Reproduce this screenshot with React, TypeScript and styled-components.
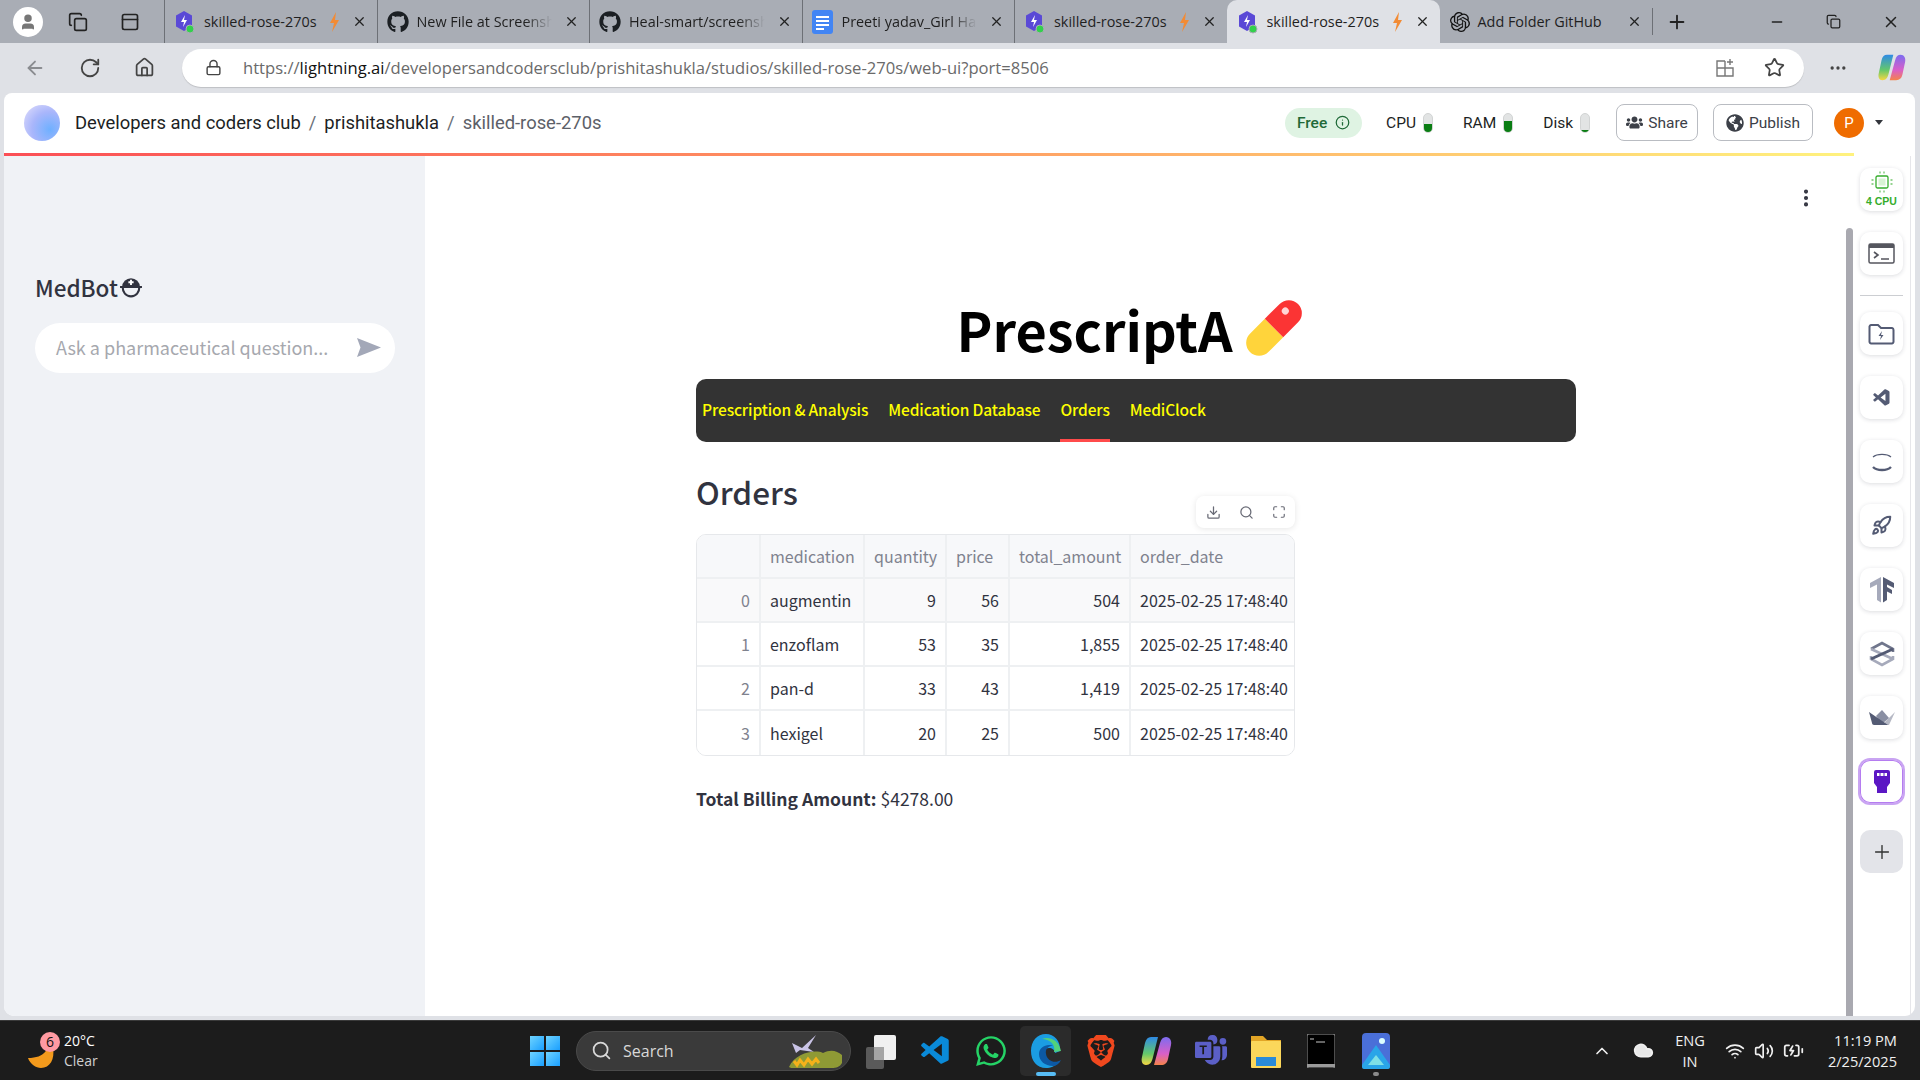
import styled, { createGlobalStyle } from 'styled-components';
import { FaGithub, FaWhatsapp, FaUsers, FaGlobeAmericas } from 'react-icons/fa';
import { SiOpenai, SiBrave } from 'react-icons/si';
import { BsMicrosoftTeams } from 'react-icons/bs';
import { VscVscode } from 'react-icons/vsc';
import {
    ArrowLeft, RotateCw, Home, Lock, Star, MoreHorizontal, X, Plus, Minus, Copy,
    Info, MoreVertical, Download, Search, Maximize, Rocket,
    ChevronUp, Wifi, Volume2, BatteryCharging, Cloud, User, PanelTop,
} from 'lucide-react';

const GlobalStyle = createGlobalStyle`
    html, body { margin: 0; padding: 0; height: 1080px; overflow: hidden; }
    #root { height: 1080px; }
    * { box-sizing: border-box; }
`;

const streamlitFont = `"Noto Sans CJK SC", "Noto Sans", sans-serif`;
const chromeFont = `"Open Sans", "Noto Sans", sans-serif`;

const Page = styled.div`
    width: 1920px;
    height: 1080px;
    display: flex;
    flex-direction: column;
    background: #dfe1e6;
    font-family: ${chromeFont};
`;

/* browser tab strip */
const TabStrip = styled.div`
    height: 43px;
    display: flex;
    align-items: center;
    background: #a9adb5;
    flex-shrink: 0;
`;
const StripStart = styled.div`
    width: 164px;
    display: flex;
    align-items: center;
    gap: 25px;
    padding-left: 13px;
`;
const PanelSlot = styled.span`
    margin-left: 7px;
    display: flex;
`;
const ProfileDot = styled.div`
    width: 30px;
    height: 30px;
    border-radius: 50%;
    background: #fff;
    display: flex;
    align-items: center;
    justify-content: center;
`;
const Tab = styled.div<{ $active?: boolean; $sep?: boolean }>`
    width: ${({ $active }) => ($active ? '213px' : '212.5px')};
    height: 43px;
    display: flex;
    align-items: center;
    padding: 0 10px 0 9px;
    font-size: 14.4px;
    color: #1f1f1f;
    border-left: 1px solid ${({ $sep }) => ($sep ? '#6d7076' : 'transparent')};
    background: ${({ $active }) => ($active ? '#dfe1e6' : 'transparent')};
    border-radius: ${({ $active }) => ($active ? '10px 10px 0 0' : '0')};
    svg { flex-shrink: 0; }
`;
const TabTitle = styled.span<{ $fade?: boolean }>`
    flex: 1;
    min-width: 0;
    margin-left: 8px;
    white-space: nowrap;
    ${({ $fade }) => $fade && 'mask-image: linear-gradient(90deg, #000 80%, transparent 100%);'}
`;
const TabClose = styled.span`
    margin-left: 12px;
    display: flex;
`;
const StripEnd = styled.div`
    flex: 1;
    display: flex;
    align-items: center;
    border-left: 1px solid #6d7076;
    height: 27px;
    padding-left: 13px;
`;
const WindowControls = styled.div`
    margin-left: auto;
    display: flex;
    align-items: center;
    gap: 41px;
    padding-right: 20px;
`;

/* address bar */
const Toolbar = styled.div`
    height: 50px;
    display: flex;
    align-items: center;
    padding: 0 14px 1px 24px;
    color: #444;
    flex-shrink: 0;
`;
const NavIcons = styled.div`
    display: flex;
    align-items: center;
    gap: 33px;
    width: 158px;
`;
const AddressBar = styled.div`
    width: 1622px;
    height: 38px;
    border-radius: 19px;
    background: #fff;
    box-shadow: 0 1px 1px rgba(0, 0, 0, 0.15);
    display: flex;
    align-items: center;
    padding: 0 19px 0 23px;
`;
const Url = styled.div`
    margin-left: 21px;
    font-size: 16.6px;
    color: #6a6a6a;
    flex: 1;
    white-space: nowrap;
    b { color: #111; font-weight: 400; }
`;
const BarIcons = styled.div`
    display: flex;
    align-items: center;
    gap: 29px;
`;
const ToolbarEnd = styled.div`
    flex: 1;
    display: flex;
    align-items: center;
    justify-content: flex-end;
    gap: 29px;
`;

/* the web page window */
const Window = styled.div`
    height: 923px;
    margin: 0 5px 0 4px;
    display: flex;
    flex-direction: column;
    background: #fff;
    border-radius: 8px 8px 10px 10px;
    overflow: hidden;
    flex-shrink: 0;
`;
const AppHeader = styled.header`
    height: 60px;
    display: flex;
    align-items: center;
    padding: 0 0 1px 20px;
    font-family: Roboto, sans-serif;
    flex-shrink: 0;
`;
const Logo = styled.div`
    width: 36px;
    height: 36px;
    border-radius: 50%;
    background: radial-gradient(circle at 72% 68%, #6fb0ff 0%, #a9b6fb 50%, #e4e0fb 100%);
`;
const Crumbs = styled.div`
    margin-left: 15px;
    display: flex;
    align-items: center;
    gap: 8px;
    font-size: 18.4px;
    color: #1d1f24;
`;
const CrumbSep = styled.span`
    color: #6b6f78;
`;
const CrumbLast = styled.span`
    color: #5c6068;
`;
const HeaderEnd = styled.div`
    margin-left: auto;
    display: flex;
    align-items: center;
    padding-right: 32px;
`;
const FreePill = styled.div`
    width: 77px;
    height: 30px;
    border-radius: 15px;
    background: #dff3e3;
    color: #1f6a38;
    font-size: 15.5px;
    font-weight: 500;
    display: flex;
    align-items: center;
    justify-content: center;
    gap: 8px;
    margin-right: 24px;
`;
const Stats = styled.div`
    display: flex;
    align-items: center;
    gap: 30px;
    margin-right: 26px;
`;
const Stat = styled.div`
    display: flex;
    align-items: center;
    gap: 7px;
    font-size: 15.5px;
    color: #1d1f24;
`;
const Meter = styled.div`
    width: 10px;
    height: 20px;
    border-radius: 5px;
    background: #e2e4e4;
    border: 1px solid #d2d4d4;
    overflow: hidden;
    display: flex;
    align-items: flex-end;
`;
const MeterFill = styled.div<{ $level: number }>`
    width: 100%;
    height: ${({ $level }) => $level}%;
    background: #0a7d13;
`;
const HeaderButton = styled.div<{ $width: number }>`
    width: ${({ $width }) => $width}px;
    height: 37px;
    border: 1px solid #b9bcc2;
    border-radius: 8px;
    display: flex;
    align-items: center;
    justify-content: center;
    gap: 5px;
    font-size: 15.5px;
    color: #3c4048;
    margin-right: 15px;
`;
const Avatar = styled.div`
    width: 30px;
    height: 30px;
    margin-left: 6px;
    border-radius: 50%;
    background: #ef6c00;
    color: #fff;
    font-size: 15px;
    display: flex;
    align-items: center;
    justify-content: center;
`;
const Caret = styled.div`
    margin-left: 11px;
    border-left: 4px solid transparent;
    border-right: 4px solid transparent;
    border-top: 5px solid #33363c;
`;
const Rainbow = styled.div`
    height: 3px;
    flex-shrink: 0;
    width: 1850px;
    background: linear-gradient(90deg, #fb4f56 0%, #ff9a62 50%, #fff27e 100%);
`;

const Body = styled.div`
    flex: 1;
    display: flex;
    min-height: 0;
`;
const Sidebar = styled.aside`
    width: 421px;
    background: #f0f2f6;
    padding: 114px 31px 0;
    font-family: ${streamlitFont};
    color: #31333f;
`;
const SideTitle = styled.div`
    display: flex;
    align-items: center;
    height: 34px;
    font-size: 22.5px;
    font-weight: 500;
    gap: 1px;
`;
const AskBox = styled.div`
    margin-top: 19px;
    width: 360px;
    height: 50px;
    border-radius: 25px;
    background: #fff;
    display: flex;
    align-items: center;
    justify-content: space-between;
    padding: 0 14px 2px 21px;
    font-size: 18px;
    color: #a6a8ae;
    white-space: nowrap;
`;
const Main = styled.main`
    position: relative;
    width: 1421px;
    padding: 141px 270px 0 271px;
    font-family: ${streamlitFont};
    color: #31333f;
`;
const KebabSpot = styled.div`
    position: absolute;
    top: 31px;
    right: 29px;
    color: #31333f;
    display: flex;
`;
const Title = styled.h1`
    margin: 0 0 20px;
    height: 62px;
    display: flex;
    align-items: center;
    justify-content: center;
    gap: 11px;
    font-size: 54px;
    font-weight: 700;
    color: #000;
    padding-right: 12px;
`;
const TabNav = styled.nav`
    height: 63px;
    border-radius: 10px;
    background: #333;
    display: flex;
    padding: 0 6px;
    gap: 20px;
`;
const NavTab = styled.div<{ $active?: boolean }>`
    display: flex;
    align-items: center;
    font-size: 15.5px;
    font-weight: 500;
    letter-spacing: -0.12px;
    color: #ffff00;
    padding-bottom: 3px;
    border-bottom: 3px solid ${({ $active }) => ($active ? '#ff4b4b' : 'transparent')};
    border-top: 3px solid transparent;
`;
const Heading = styled.h2`
    margin: 29px 0 0;
    height: 40px;
    display: flex;
    align-items: center;
    font-size: 31.5px;
    font-weight: 500;
    color: #31333f;
`;
const TableWrap = styled.div`
    position: relative;
    margin-top: 23px;
    width: 599px;
`;
const TableTools = styled.div`
    position: absolute;
    top: -38px;
    right: 0;
    width: 99px;
    height: 32px;
    background: #fff;
    border-radius: 8px;
    box-shadow: 0 1px 6px rgba(0, 0, 0, 0.1);
    display: flex;
    align-items: center;
    justify-content: center;
    gap: 18px;
    color: #686a75;
`;
const DataTable = styled.div`
    border: 1px solid #e6e8eb;
    border-radius: 10px;
    overflow: hidden;
`;
const Row = styled.div<{ $shade?: string }>`
    display: grid;
    grid-template-columns: 62px 104px 82px 63px 121px 1fr;
    height: 44px;
    background: ${({ $shade }) => $shade ?? '#fff'};
    border-bottom: 2px solid #eef0f2;
    &:last-child { border-bottom: 0; }
`;
const Cell = styled.div<{ $right?: boolean; $muted?: boolean }>`
    display: flex;
    align-items: center;
    justify-content: ${({ $right }) => ($right ? 'flex-end' : 'flex-start')};
    padding: 0 9px 0 9px;
    font-size: 16px;
    color: ${({ $muted }) => ($muted ? '#7f828e' : '#31333f')};
    border-left: 2px solid #eef0f2;
    white-space: nowrap;
    &:first-child { border-left: 0; }
`;
const Billing = styled.div`
    margin-top: 30px;
    font-size: 17.5px;
    color: #31333f;
    b { font-weight: 700; }
`;
const ScrollTrack = styled.div`
    width: 7px;
    display: flex;
    flex-direction: column;
    background: #fff;
`;
const ScrollThumb = styled.div`
    margin-top: 72px;
    flex: 1;
    background: #a9a9b0;
    border-radius: 4px 4px 0 0;
`;
const Rail = styled.div`
    width: 57px;
    display: flex;
    flex-direction: column;
    align-items: center;
    padding-top: 12px;
    background: #fff;
    box-shadow: 1px 0 0 #e6e6ea;
`;
const RailGroup = styled.div`
    display: flex;
    flex-direction: column;
    gap: 21px;
`;
const RailDivider = styled.div`
    width: 43px;
    height: 1px;
    background: #ccced2;
    margin: 20px 0 16px;
`;
const RailButton = styled.div<{ $tone?: 'plain' | 'grey' | 'glow' }>`
    width: 43px;
    height: 43px;
    border-radius: 10px;
    display: flex;
    flex-direction: column;
    align-items: center;
    justify-content: center;
    color: #545b74;
    background: ${({ $tone }) => ($tone === 'grey' ? '#e3e4e9' : '#fff')};
    box-shadow: ${({ $tone }) => ($tone === 'grey' ? 'none' : $tone === 'glow' ? '0 0 0 2px #c9a4f2, inset 0 0 0 1px #b57cf0' : '0 1px 4px rgba(40, 44, 60, 0.16)')};
`;
const CpuLabel = styled.span`
    font-family: "Liberation Sans", sans-serif;
    font-size: 10.5px;
    font-weight: 700;
    color: #35ad2c;
    line-height: 10px;
    margin: 2px 0 3px;
    white-space: nowrap;
`;
const RailPlus = styled.div`
    margin-top: 27px;
`;

/* windows taskbar */
const Taskbar = styled.footer`
    margin-top: auto;
    height: 60px;
    flex-shrink: 0;
    background: #1c1c1c;
    border-top: 1px solid #3a3a3a;
    display: flex;
    align-items: center;
    color: #fff;
    font-family: ${chromeFont};
`;
const Weather = styled.div`
    width: 530px;
    display: flex;
    align-items: center;
    padding-left: 26px;
    gap: 8px;
`;
const WeatherIcon = styled.div`
    position: relative;
    width: 30px;
    height: 36px;
    display: flex;
`;
const WeatherBadge = styled.span`
    position: absolute;
    top: -1px;
    right: -4px;
    width: 20px;
    height: 20px;
    border-radius: 50%;
    background: #ff9aa2;
    color: #111;
    font-size: 14px;
    display: flex;
    align-items: center;
    justify-content: center;
`;
const WeatherText = styled.div`
    font-size: 14px;
    line-height: 20px;
    span { display: block; color: #d0d0d0; }
`;
const WinLogo = styled.div`
    width: 30px;
    height: 30px;
    display: grid;
    grid-template-columns: 1fr 1fr;
    gap: 2px;
    div { background: linear-gradient(135deg, #6fd4ff, #1a9fff); }
`;
const SearchPill = styled.div`
    margin-left: 16px;
    width: 275px;
    height: 40px;
    border-radius: 20px;
    background: #3a3a3a;
    border: 1px solid #4a4a4a;
    display: flex;
    align-items: center;
    padding: 0 4px 0 14px;
    gap: 11px;
    font-size: 16px;
    color: #d8d8d8;
`;
const SearchArt = styled.div`
    margin-left: auto;
    display: flex;
`;
const TaskIcons = styled.div`
    display: flex;
    align-items: center;
    margin-left: 2px;
`;
const TaskIcon = styled.div<{ $selected?: boolean }>`
    position: relative;
    width: 55px;
    height: 50px;
    display: flex;
    align-items: center;
    justify-content: center;
    &::before {
        content: '';
        position: absolute;
        inset: 0 2px;
        border-radius: 5px;
        background: ${({ $selected }) => ($selected ? '#2b2b2b' : 'transparent')};
    }
    svg { position: relative; }
`;
const TaskMark = styled.span<{ $color: string; $width: number }>`
    position: absolute;
    bottom: 0;
    left: 50%;
    transform: translateX(-50%);
    width: ${({ $width }) => $width}px;
    height: 4px;
    border-radius: 2px;
    background: ${({ $color }) => $color};
`;
const Tray = styled.div`
    margin-left: auto;
    display: flex;
    align-items: center;
    padding-right: 23px;
    font-size: 14.6px;
    color: #f0f0f0;
`;
const CloudSlot = styled.span`
    margin-left: 21px;
    display: flex;
`;
const Lang = styled.div`
    margin: 0 20px 0 21px;
    text-align: center;
    line-height: 21px;
`;
const TrayIcons = styled.div`
    display: flex;
    align-items: center;
    gap: 9px;
    margin-right: 24px;
`;
const Clock = styled.div`
    text-align: right;
    line-height: 21px;
`;

const LightningFav = () => (
    <svg width="22" height="24" viewBox="0 0 22 24">
        <path d="M10 1l8 4.5v11L10 21 2 16.500v-11z" fill="#5a49d6" />
        <path d="M11 5l-4 7h3l-1 5 4-7h-3z" fill="#fff" />
        <circle cx="16" cy="19" r="4" fill="#33d04c" stroke="#a9adb5" />
    </svg>
);
const Bolt = () => (
    <svg width="11" height="20" viewBox="0 0 11 20">
        <path d="M7 0L1 11h4l-2 9 7-12H6z" fill="#f28b35" />
    </svg>
);
const DocsFav = () => (
    <svg width="22" height="24" viewBox="0 0 22 24">
        <rect width="21" height="24" rx="3" fill="#4285f4" />
        <path d="M4 7h13M4 11h13M4 15h13M4 19h8" stroke="#fff" strokeWidth="2" />
    </svg>
);
const TileIcon = () => (
    <svg width="20" height="20" viewBox="0 0 20 20" fill="none" stroke="#777" strokeWidth="1.400">
        <path d="M10 3H2v15h16v-8H2M10 3v15" />
        <path d="M15 1v6M12 4h6" />
    </svg>
);
const Pill = () => (
    <svg width="60" height="60" viewBox="0 0 60 60">
        <g transform="rotate(-45 30 30)">
            <path d="M30 17H9a13 13 0 0 0 0 26h21z" fill="#ffd43b" />
            <path d="M30 17h21a13 13 0 0 1 0 26H30z" fill="#fb3434" />
            <circle cx="50" cy="26" r="3.500" fill="#ffd5d5" />
        </g>
    </svg>
);
const MedIcon = () => (
    <svg width="24" height="24" viewBox="0 0 23 22">
        <path d="M3 11a8.500 8.500 0 0 1 17 0z" fill="#31333f" />
        <path d="M1 11h21M3.500 11c0 5 3 9 8 9s8-4 8-9" fill="none" stroke="#31333f" strokeWidth="2" />
        <path d="M11.500 4v5M9 6.500h5" stroke="#fff" strokeWidth="1.800" />
    </svg>
);
const SendIcon = () => (
    <svg width="24" height="19" viewBox="0 0 24 19">
        <path d="M0 0l24 9.500L0 19l3.500-9.500z" fill="#a3a8b8" />
    </svg>
);
const Chip = () => (
    <svg width="24" height="24" viewBox="0 0 24 24" fill="none" stroke="#35ad2c" strokeWidth="1.300">
        <rect x="6" y="6" width="12" height="12" rx="1.500" />
        <rect x="8.500" y="8.500" width="7" height="7" fill="#d8f3d4" stroke="none" />
        <path d="M10 1.500v2M14 1.500v2M10 20.500v2M14 20.500v2M1.500 10h2M1.500 14h2M20.500 10h2M20.500 14h2" strokeOpacity="0.7" />
    </svg>
);
const TerminalIcon = () => (
    <svg width="27" height="21" viewBox="0 0 27 21">
        <rect x="1" y="1" width="25" height="19" rx="1.500" fill="none" stroke="#55565e" strokeWidth="1.500" />
        <rect x="1" y="1" width="25" height="4" fill="#55565e" />
        <path d="M6 9l4 3-4 3M13 16h8" fill="none" stroke="#55565e" strokeWidth="1.600" />
    </svg>
);
const FolderBolt = () => (
    <svg width="27" height="22" viewBox="0 0 27 22">
        <path d="M1.500 3.500A2 2 0 0 1 3 2h7l3 3h11a2 2 0 0 1 1.500 2v12a2 2 0 0 1-1.500 1.500H3A2 2 0 0 1 1.500 19z" fill="none" stroke="#545b74" strokeWidth="2" />
        <path d="M14 8l-3.500 5H13l-1 4 3.500-5H13z" fill="#545b74" />
    </svg>
);
const ArcIcon = () => (
    <svg width="20" height="20" viewBox="0 0 20 20" fill="none" stroke="#545b74">
        <path d="M1 5c4-3.500 14-3.500 18 0" strokeWidth="1.200" />
        <path d="M1 15c4 4 14 4 18 0" strokeWidth="2.400" />
    </svg>
);
const TfIcon = () => (
    <svg width="26" height="27" viewBox="0 0 26 27">
        <path d="M12 1L1 7v5l7-3.500V24l4 2.500z" fill="#a6aabb" />
        <path d="M14 1l11 6v5l-7-3.500V11l5 3v4l-5-2.500V24l-4 2.500z" fill="#545b74" />
    </svg>
);
const StackIcon = () => (
    <svg width="26" height="26" viewBox="0 0 26 26" fill="none">
        <path d="M2 8l11-6 11 6v3" stroke="#70768c" strokeWidth="2.600" />
        <path d="M2 15v3l11 6 11-6v-3" stroke="#a6aabb" strokeWidth="2.600" />
        <path d="M2 8l22 10" stroke="#a6aabb" strokeWidth="2.600" />
        <path d="M24 8L2 18" stroke="#545b74" strokeWidth="3" />
    </svg>
);
const BoatIcon = () => (
    <svg width="26" height="16" viewBox="0 0 26 16">
        <path d="M26 2l-6 13h-7l7-7z" fill="#b5b8c4" />
        <path d="M13 0l7 8-7 6-6-8z" fill="#8a8fa3" />
        <path d="M0 2l19 13H5c-1 0-2-1-2-2z" fill="#545b74" />
    </svg>
);
const PlugIcon = () => (
    <svg width="18" height="26" viewBox="0 0 18 26">
        <path d="M3 1h12a2 2 0 0 1 2 2v11l-3 4v6H4v-6l-3-4V3a2 2 0 0 1 2-2z" fill="#5b17c4" />
        <path d="M4 4h10v3H4z" fill="#fff" />
        <path d="M7 4v3M11 4v3" stroke="#5b17c4" />
    </svg>
);
const Moon = () => (
    <svg width="30" height="36" viewBox="0 0 30 36">
        <path d="M22 4c2 12-3 21-20 21 2 6 8 10 13 10 9 0 14-9 12-20-1-5-3-9-5-11z" fill="#f39a1c" />
    </svg>
);
const SearchDeco = () => (
    <svg width="60" height="36" viewBox="0 0 60 36">
        <path d="M6 10l10 5 14-13-8 13 6 4-14-2-4 3z" fill="#c9c3e6" />
        <path d="M3 34c6-14 26-18 34-14 8-4 14-2 19 2v8c-2 4-6 5-10 5H8c-2 0-4 0-5-1z" fill="#8f9a35" />
        <path d="M8 28l3 4 3-5 4 5 4-6 4 5 4-5 3 4" fill="none" stroke="#f5b21a" strokeWidth="3" />
    </svg>
);
const TaskView = () => (
    <svg width="30" height="36" viewBox="0 0 30 36">
        <rect x="0" y="14" width="18" height="22" rx="2" fill="#5a5a5a" />
        <rect x="8" y="2" width="22" height="25" rx="2" fill="#f0f0f0" />
        <rect x="8" y="14" width="10" height="13" fill="#a5a5a5" />
    </svg>
);
const EdgeIcon = () => (
    <svg width="32" height="36" viewBox="0 0 32 36">
        <path d="M16 1C7 1 1 8 1 18s6 17 15 17c5 0 9-2 11-5-9 3-15-2-15-8 0-4 3-7 7-7 3 0 6 2 6 5l5-2c1-10-6-17-14-17z" fill="#1b9de2" />
        <path d="M9 21c0 7 6 12 14 12 3 0 6-2 8-6-6 4-14 1-15-6-1-5 3-9 8-8-7-3-15 1-15 8z" fill="#0c59a4" />
        <path d="M12 6c6-3 17 0 19 12l-7 1c2-8-5-13-12-13z" fill="#52d17c" />
    </svg>
);
const CopilotIcon = ({ size }: { size: number }) => (
    <svg width={size} height={size} viewBox="0 0 32 32">
        <defs>
            <linearGradient id="cpA" x1="0" y1="0" x2="0" y2="1">
                <stop offset="0" stopColor="#2f8be6" />
                <stop offset="0.6" stopColor="#65c86a" />
                <stop offset="1" stopColor="#f6d743" />
            </linearGradient>
            <linearGradient id="cpB" x1="0" y1="0" x2="0" y2="1">
                <stop offset="0" stopColor="#7c6cf0" />
                <stop offset="0.6" stopColor="#d95fc8" />
                <stop offset="1" stopColor="#f5834a" />
            </linearGradient>
        </defs>
        <path d="M11 2h7l-5 20c-1 5-3 8-7 8-4 0-5-4-4-8l3-14c1-4 3-6 6-6z" fill="url(#cpA)" />
        <path d="M14 30h7c4 0 6-2 7-6l3-14c1-4-1-8-5-8-3 0-5 2-6 6z" fill="url(#cpB)" />
    </svg>
);
const FolderApp = () => (
    <svg width="32" height="36" viewBox="0 0 32 36">
        <path d="M1 3h12l4 4h14v4H1z" fill="#e2a526" />
        <rect x="1" y="8" width="30" height="27" rx="1" fill="#fbd75b" />
        <rect x="6" y="24" width="20" height="9" fill="#2a8bd8" />
    </svg>
);
const TerminalApp = () => (
    <svg width="28" height="34" viewBox="0 0 28 34">
        <rect width="28" height="34" rx="2" fill="#000" stroke="#9a9a9a" />
        <rect width="28" height="3" y="30" fill="#9a9a9a" />
        <path d="M3 5h4M9 8h9" stroke="#c8c8c8" />
    </svg>
);
const PhotosApp = () => (
    <svg width="28" height="36" viewBox="0 0 28 36">
        <rect width="28" height="36" rx="4" fill="#4a6fd8" />
        <circle cx="20" cy="8" r="3" fill="#dff" />
        <path d="M0 32l14-20 14 20v2a2 2 0 0 1-2 2H2a2 2 0 0 1-2-2z" fill="#2aa5e8" />
        <path d="M6 32l8-10 8 10z" fill="#7fe0e6" />
    </svg>
);

const rows = [
    { id: 0, med: 'augmentin', qty: '9', price: '56', total: '504', shade: '#f9f9fa' },
    { id: 1, med: 'enzoflam', qty: '53', price: '35', total: '1,855' },
    { id: 2, med: 'pan-d', qty: '33', price: '43', total: '1,419' },
    { id: 3, med: 'hexigel', qty: '20', price: '25', total: '500' },
];

const tabs = [
    { title: 'skilled-rose-270s', icon: <LightningFav />, bolt: true },
    { title: 'New File at Screensh', icon: <FaGithub size={22} color="#1b1f23" />, sep: true, fade: true },
    { title: 'Heal-smart/screensh', icon: <FaGithub size={22} color="#1b1f23" />, sep: true, fade: true },
    { title: 'Preeti yadav_Girl Hac', icon: <DocsFav />, sep: true, fade: true },
    { title: 'skilled-rose-270s', icon: <LightningFav />, bolt: true, sep: true },
    { title: 'skilled-rose-270s', icon: <LightningFav />, bolt: true, active: true },
    { title: 'Add Folder GitHub', icon: <SiOpenai size={20} color="#111" /> },
];

export default function App() {
    return (
        <Page>
            <GlobalStyle />
            <TabStrip>
                <StripStart>
                    <ProfileDot><User size={18} color="#777" fill="#777" /></ProfileDot>
                    <Copy size={20} color="#222" />
                    <PanelSlot><PanelTop size={20} color="#222" /></PanelSlot>
                </StripStart>
                {tabs.map((t, i) => (
                    <Tab key={i} $active={t.active} $sep={t.sep || i === 0}>
                        {t.icon}
                        <TabTitle $fade={t.fade}>{t.title}</TabTitle>
                        {t.bolt && <Bolt />}
                        <TabClose><X size={15} color="#222" /></TabClose>
                    </Tab>
                ))}
                <StripEnd>
                    <Plus size={22} color="#222" />
                    <WindowControls>
                        <Minus size={16} color="#222" />
                        <Copy size={15} color="#222" />
                        <X size={18} color="#222" />
                    </WindowControls>
                </StripEnd>
            </TabStrip>

            <Toolbar>
                <NavIcons>
                    <ArrowLeft size={22} color="#8a8c90" />
                    <RotateCw size={22} />
                    <Home size={21} />
                </NavIcons>
                <AddressBar>
                    <Lock size={17} />
                    <Url>https://<b>lightning.ai</b>/developersandcodersclub/prishitashukla/studios/skilled-rose-270s/web-ui?port=8506</Url>
                    <BarIcons>
                        <TileIcon />
                        <Star size={21} />
                    </BarIcons>
                </AddressBar>
                <ToolbarEnd>
                    <MoreHorizontal size={20} />
                    <CopilotIcon size={29} />
                </ToolbarEnd>
            </Toolbar>

            <Window>
                <AppHeader>
                    <Logo />
                    <Crumbs>
                        <span>Developers and coders club</span>
                        <CrumbSep>/</CrumbSep>
                        <span>prishitashukla</span>
                        <CrumbSep>/</CrumbSep>
                        <CrumbLast>skilled-rose-270s</CrumbLast>
                    </Crumbs>
                    <HeaderEnd>
                        <FreePill>Free <Info size={15} /></FreePill>
                        <Stats>
                            <Stat>CPU <Meter><MeterFill $level={40} /></Meter></Stat>
                            <Stat>RAM <Meter><MeterFill $level={60} /></Meter></Stat>
                            <Stat>Disk <Meter><MeterFill $level={8} /></Meter></Stat>
                        </Stats>
                        <HeaderButton $width={82}><FaUsers size={17} />Share</HeaderButton>
                        <HeaderButton $width={100}><FaGlobeAmericas size={18} />Publish</HeaderButton>
                        <Avatar>P</Avatar>
                        <Caret />
                    </HeaderEnd>
                </AppHeader>
                <Rainbow />
                <Body>
                    <Sidebar>
                        <SideTitle>MedBot<MedIcon /></SideTitle>
                        <AskBox>
                            Ask a pharmaceutical question...
                            <SendIcon />
                        </AskBox>
                    </Sidebar>
                    <Main>
                        <KebabSpot><MoreVertical size={22} strokeWidth={2.5} /></KebabSpot>
                        <Title>PrescriptA <Pill /></Title>
                        <TabNav>
                            <NavTab>Prescription &amp; Analysis</NavTab>
                            <NavTab>Medication Database</NavTab>
                            <NavTab $active>Orders</NavTab>
                            <NavTab>MediClock</NavTab>
                        </TabNav>
                        <Heading>Orders</Heading>
                        <TableWrap>
                            <TableTools>
                                <Download size={15} />
                                <Search size={15} />
                                <Maximize size={14} />
                            </TableTools>
                            <DataTable>
                                <Row $shade="#f7f8fa">
                                    <Cell />
                                    <Cell $muted>medication</Cell>
                                    <Cell $muted>quantity</Cell>
                                    <Cell $muted>price</Cell>
                                    <Cell $muted>total_amount</Cell>
                                    <Cell $muted>order_date</Cell>
                                </Row>
                                {rows.map((r) => (
                                    <Row key={r.id} $shade={r.shade}>
                                        <Cell $right $muted>{r.id}</Cell>
                                        <Cell>{r.med}</Cell>
                                        <Cell $right>{r.qty}</Cell>
                                        <Cell $right>{r.price}</Cell>
                                        <Cell $right>{r.total}</Cell>
                                        <Cell>2025-02-25 17:48:40</Cell>
                                    </Row>
                                ))}
                            </DataTable>
                        </TableWrap>
                        <Billing><b>Total Billing Amount:</b> $4278.00</Billing>
                    </Main>
                    <ScrollTrack><ScrollThumb /></ScrollTrack>
                    <Rail>
                        <RailGroup>
                            <RailButton><Chip /><CpuLabel>4 CPU</CpuLabel></RailButton>
                            <RailButton><TerminalIcon /></RailButton>
                        </RailGroup>
                        <RailDivider />
                        <RailGroup>
                            <RailButton><FolderBolt /></RailButton>
                            <RailButton><VscVscode size={20} /></RailButton>
                            <RailButton><ArcIcon /></RailButton>
                            <RailButton><Rocket size={21} strokeWidth={2.3} /></RailButton>
                            <RailButton><TfIcon /></RailButton>
                            <RailButton><StackIcon /></RailButton>
                            <RailButton><BoatIcon /></RailButton>
                            <RailButton $tone="glow"><PlugIcon /></RailButton>
                        </RailGroup>
                        <RailPlus>
                            <RailButton $tone="grey"><Plus size={22} color="#333" strokeWidth={1.5} /></RailButton>
                        </RailPlus>
                    </Rail>
                </Body>
            </Window>

            <Taskbar>
                <Weather>
                    <WeatherIcon><Moon /><WeatherBadge>6</WeatherBadge></WeatherIcon>
                    <WeatherText>20°C<span>Clear</span></WeatherText>
                </Weather>
                <WinLogo><div /><div /><div /><div /></WinLogo>
                <SearchPill>
                    <Search size={21} />
                    Search
                    <SearchArt><SearchDeco /></SearchArt>
                </SearchPill>
                <TaskIcons>
                    <TaskIcon><TaskView /></TaskIcon>
                    <TaskIcon><VscVscode size={34} color="#0a8ad8" /></TaskIcon>
                    <TaskIcon><FaWhatsapp size={34} color="#25d366" /></TaskIcon>
                    <TaskIcon $selected><EdgeIcon /><TaskMark $color="#58bdf5" $width={20} /></TaskIcon>
                    <TaskIcon><SiBrave size={32} color="#f0481e" /></TaskIcon>
                    <TaskIcon><CopilotIcon size={32} /></TaskIcon>
                    <TaskIcon><BsMicrosoftTeams size={32} color="#5b5fc7" /></TaskIcon>
                    <TaskIcon><FolderApp /></TaskIcon>
                    <TaskIcon><TerminalApp /></TaskIcon>
                    <TaskIcon><PhotosApp /><TaskMark $color="#8a8a8a" $width={6} /></TaskIcon>
                </TaskIcons>
                <Tray>
                    <ChevronUp size={20} />
                    <CloudSlot><Cloud size={21} fill="#e8e8e8" /></CloudSlot>
                    <Lang>ENG<br />IN</Lang>
                    <TrayIcons>
                        <Wifi size={20} />
                        <Volume2 size={20} />
                        <BatteryCharging size={21} />
                    </TrayIcons>
                    <Clock>11:19 PM<br />2/25/2025</Clock>
                </Tray>
            </Taskbar>
        </Page>
    );
}
